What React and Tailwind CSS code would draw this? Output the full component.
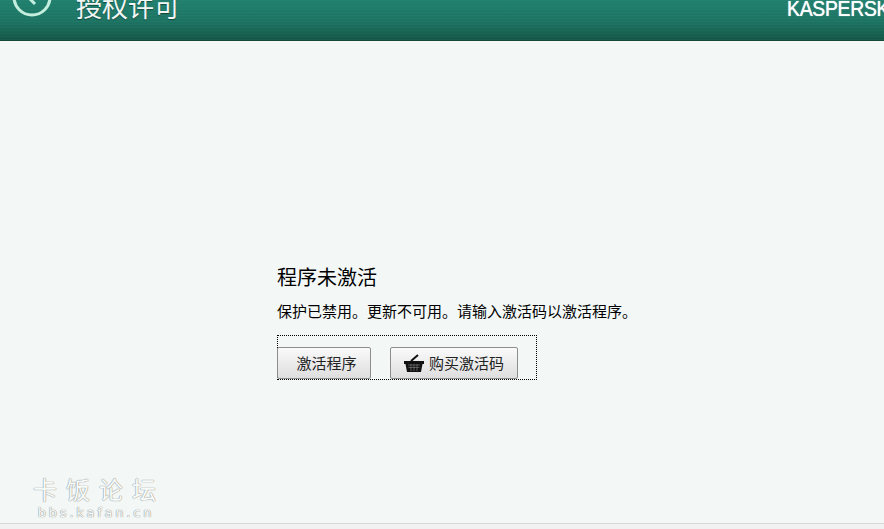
export default function App() {
  const cjk = "font-['Noto_Sans_CJK_SC','Liberation_Sans',sans-serif]";
  return (
    <div className={`relative flex h-[529px] w-[884px] flex-col overflow-hidden bg-[#f3f8f7] ${cjk}`}>
      <header className="flex h-[41px] shrink-0 items-start overflow-hidden border-b border-[#14493c] bg-[image:repeating-linear-gradient(0deg,rgba(255,255,255,0.025)_0,rgba(255,255,255,0.025)_1px,transparent_1px,transparent_3px),linear-gradient(180deg,#20806e_0%,#1d7362_55%,#135646_100%)]">
        <svg className="ml-[12px] -mt-[23px] shrink-0" width="40" height="40" viewBox="0 0 40 40" fill="none">
          <circle cx="20" cy="20" r="18" stroke="#c4eedd" strokeWidth="3" />
          <path d="M23 11 L15 19 L23 27" stroke="#c4eedd" strokeWidth="3" />
        </svg>
        <h1 className="ml-[24px] -mt-[14px] whitespace-nowrap text-[26px] leading-[40px] text-[#f2f7f5] [text-shadow:0_1px_1px_rgba(0,0,0,0.4)]">授权许可</h1>
        <div className="ml-[607px] -mt-[4px] origin-left scale-x-[0.88] whitespace-nowrap font-['Liberation_Sans',sans-serif] text-[22px] leading-[26px] tracking-[-0.3px] text-white [text-shadow:0_0_1px_#ffffff]">KASPERSKY</div>
      </header>
      <main className="flex flex-1 flex-col pl-[277px] pt-[222px]">
        <h2 className="text-[20px] leading-[28px] text-black">程序未激活</h2>
        <p className="mt-[10px] text-[15px] leading-[20px] text-black">保护已禁用。更新不可用。请输入激活码以激活程序。</p>
        <div className="mt-[14px] flex h-[45px] w-[260px] items-end gap-[19px] border border-dotted border-black">
          <button className="-ml-[1px] flex h-[32px] w-[94px] items-center justify-center rounded-[2px] border border-[#8d8d8d] bg-gradient-to-b from-[#fafafa] to-[#dedede] pl-[5px] text-[15px] text-[#222]">激活程序</button>
          <button className="flex h-[32px] w-[128px] items-center gap-[4px] rounded-[2px] border border-[#8d8d8d] bg-gradient-to-b from-[#fafafa] to-[#dedede] pl-[12px] text-[15px] text-[#222]">
            <svg width="22" height="20" viewBox="0 0 22 20" className="shrink-0">
              <path d="M8 8 L15 2" stroke="#111" strokeWidth="2" fill="none" />
              <path d="M1 8 H21 V11 H19.5 L18 19 H4 L2.5 11 H1 Z" fill="#111" />
              <path d="M5 12 H17 M5.5 14.5 H16.5 M8 11 V18 M11 11 V18 M14 11 V18" stroke="#777" strokeWidth="0.7" />
            </svg>
            购买激活码
          </button>
        </div>
      </main>
      <div className="absolute left-[32px] top-[473px] flex w-[125px] flex-col items-center text-[#f7fbfa] [text-shadow:0_0_1px_#8a8a8a,0_0_1px_#8a8a8a]">
        <div className="-mr-[9px] whitespace-nowrap text-[24px] leading-[32px] tracking-[9px]">卡饭论坛</div>
        <div className="-mr-[3px] whitespace-nowrap font-['DejaVu_Sans',sans-serif] text-[13px] leading-[16px] tracking-[2.8px]">bbs.kafan.cn</div>
      </div>
      <footer className="h-[6px] shrink-0 border-t border-[#d5d8d7] bg-[#f1f1f1]" />
    </div>
  );
}
